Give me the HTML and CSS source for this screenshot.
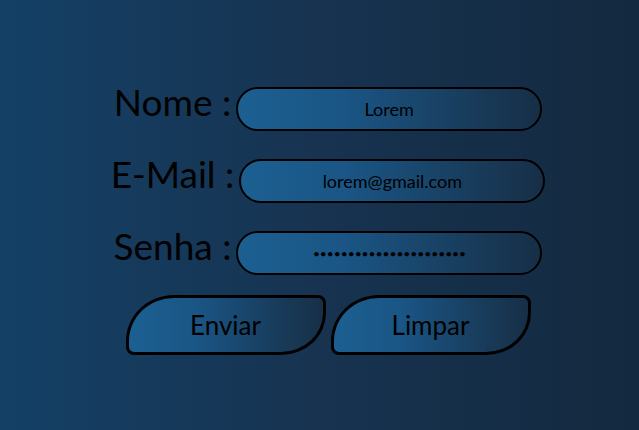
FILE: index.html
```html
<!DOCTYPE html>
<html lang="pt">
<head>
<meta charset="utf-8">
<title>Formulário</title>
<link rel="stylesheet" href="styles.css">
</head>
<body>
<main class="page">
  <form class="form">
    <div class="row">
      <label class="label" for="nome">Nome :</label>
      <input class="field" id="nome" type="text" value="Lorem">
    </div>
    <div class="row">
      <label class="label" for="email">E-Mail :</label>
      <input class="field" id="email" type="text" value="lorem@gmail.com">
    </div>
    <div class="row">
      <label class="label" for="senha">Senha :</label>
      <input class="field field-secret" id="senha" type="password" value="aaaaaaaaaaaaaaaaaaaaaa">
    </div>
    <div class="buttons">
      <button class="btn" type="button">Enviar</button>
      <button class="btn" type="button">Limpar</button>
    </div>
  </form>
</main>
</body>
</html>
```

FILE: styles.css
```css
html, body {
  margin: 0;
  padding: 0;
  height: 100%;
}
body {
  background: linear-gradient(to right, #144066 0%, #173350 50%, #13293f 100%);
  font-family: Lato, "Open Sans", sans-serif;
  color: #000;
}
.page {
  height: 100%;
  box-sizing: border-box;
  padding: 87px 0 0 17px;
}
.form {
  display: flex;
  flex-direction: column;
  align-items: center;
  gap: 28px;
}
.row {
  display: flex;
  align-items: flex-start;
  gap: 5px;
}
.label {
  font-size: 37px;
  line-height: 30px;
  white-space: nowrap;
}
.field {
  width: 306px;
  height: 44px;
  box-sizing: border-box;
  border: 2px solid #000;
  border-radius: 22px;
  background: linear-gradient(to right, #1b6091 0%, #1a5585 35%, #183a58 80%, #172f47 100%);
  font-family: Lato, "Open Sans", sans-serif;
  font-size: 18px;
  color: #000;
  text-align: center;
  padding: 0 10px;
  outline: none;
}
.field-secret {
  font-size: 12px;
}
.buttons {
  display: flex;
  gap: 5px;
  margin-top: -8px;
}
.btn {
  width: 200px;
  height: 60px;
  box-sizing: border-box;
  border: 3px solid #000;
  border-radius: 48px 8px 45px 8px / 46px 8px 42px 8px;
  background: linear-gradient(to right, #1b6091 0%, #1a5585 35%, #183a58 80%, #172f47 100%);
  font-family: Lato, "Open Sans", sans-serif;
  font-size: 26px;
  color: #000;
  padding: 0;
}
```
